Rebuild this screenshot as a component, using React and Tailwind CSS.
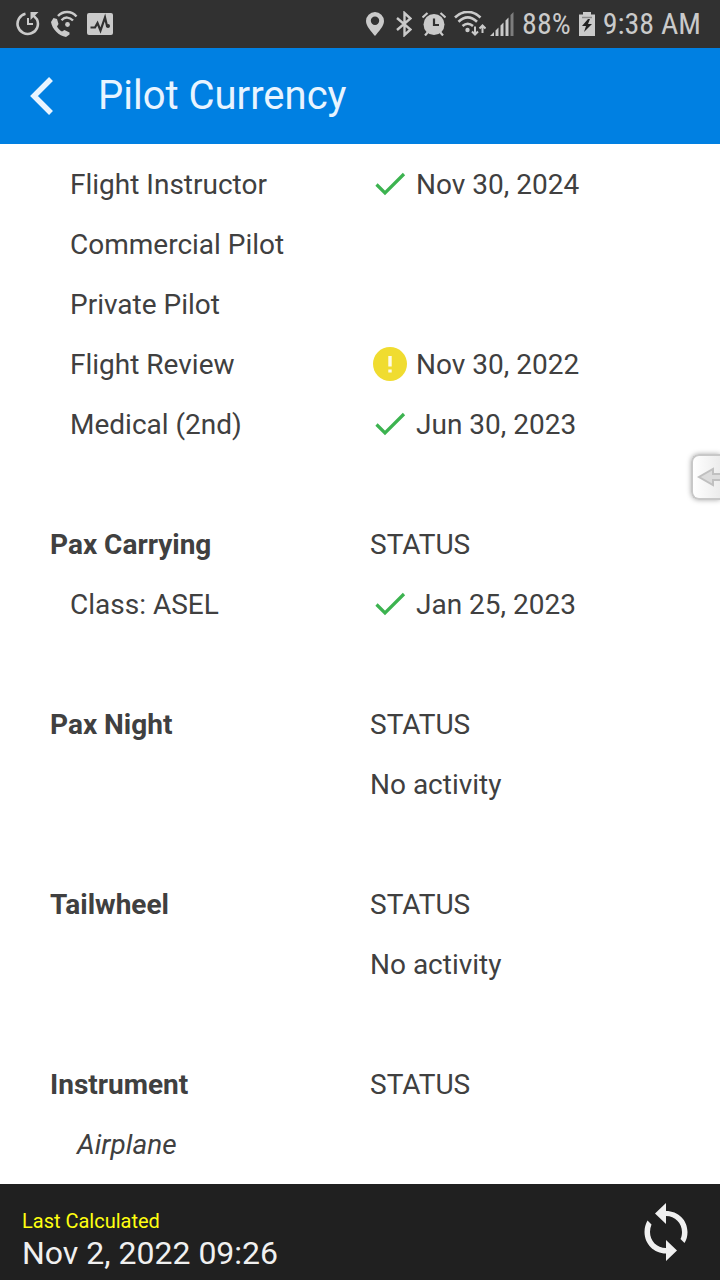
import React from 'react';

const sections = [
  {
    id: 'certificates',
    rows: [
      { label: 'Flight Instructor', state: 'ok', value: 'Nov 30, 2024' },
      { label: 'Commercial Pilot' },
      { label: 'Private Pilot' },
      { label: 'Flight Review', state: 'warn', value: 'Nov 30, 2022' },
      { label: 'Medical (2nd)', state: 'ok', value: 'Jun 30, 2023' },
    ],
  },
  {
    id: 'pax-carrying',
    title: 'Pax Carrying',
    rows: [{ label: 'Class: ASEL', state: 'ok', value: 'Jan 25, 2023' }],
  },
  { id: 'pax-night', title: 'Pax Night', rows: [{ value: 'No activity' }] },
  { id: 'tailwheel', title: 'Tailwheel', rows: [{ value: 'No activity' }] },
  { id: 'instrument', title: 'Instrument', rows: [{ label: 'Airplane', group: true }] },
];

function StatusBar() {
  return (
    <div className="flex h-12 items-center justify-between bg-[#313131] pl-4 pr-[19px] text-[#cacaca]">
      <div className="flex items-center gap-2.5">
        {/* Timer */}
        <svg className="h-6 w-6" viewBox="0 0 24 24" fill="none" stroke="currentColor" strokeWidth="2.6">
          <path d="M9.5 1.8A10.2 10.2 0 1 0 21 7.5L17 3" />
          <path d="M12 6V12H17" strokeWidth="2" />
          <path d="M14.5 0H22.5L14.5 8Z" fill="currentColor" stroke="none" />
        </svg>
        {/* Wi-Fi calling */}
        <svg className="h-7 w-7" viewBox="0 0 28 28" fill="none" stroke="currentColor" strokeWidth="2.4">
          <path d="M3.5 8L7 9L8.5 14L7 16.5C8.5 19 10 20.5 12 21.500L14.500 20L19.5 22.5V24.5L16 27C9 26 2 19 1 12Z" fill="currentColor" stroke="none" />
          <path d="M8 6C13 0.5 21.5 0.5 26.5 6.5M11.5 10.2C15 6.5 19.5 6.8 23 10.5" />
          <circle cx="17.5" cy="14.5" r="2.4" fill="currentColor" stroke="none" />
        </svg>
        {/* Activity */}
        <svg className="-ml-px h-6 w-[26px]" viewBox="0 0 26 24">
          <rect y="1" width="26" height="22" rx="2" fill="currentColor" />
          <path d="M3.5 15.5H8L10.5 11L13.5 18.5L18 5.5L20 14H22" fill="none" stroke="#313131" strokeWidth="2.2" />
          <circle cx="21" cy="14" r="2" fill="#313131" />
        </svg>
      </div>
      <div className="flex items-center">
        {/* Location */}
        <svg className="h-6 w-[18px]" viewBox="0 0 18 24" fill="currentColor" fillRule="evenodd">
          <path d="M9 0A9 9 0 0 0 0 9C0 14 5 19 9 24C13 19 18 14 18 9A9 9 0 0 0 9 0ZM9 4.5A4.2 4.2 0 1 1 9 12.9A4.2 4.2 0 1 1 9 4.5Z" />
        </svg>
        {/* Bluetooth */}
        <svg className="ml-3 h-[26px] w-4" viewBox="0 0 16 26" fill="none" stroke="currentColor" strokeWidth="2.4">
          <path d="M1 7L14.5 18.5L8.5 24V2L14.5 7.5L1 19" />
        </svg>
        {/* Alarm */}
        <svg className="ml-2.5 h-6 w-6" viewBox="0 0 24 24" fill="none" stroke="currentColor" strokeWidth="2.2">
          <circle cx="12" cy="12.5" r="10.5" fill="currentColor" stroke="none" />
          <path d="M0.5 5.5L5.5 1M23.5 5.5L18.5 1M6 20L3 23.5M18 20L21 23.5" />
          <path d="M12 6.5V13H17" stroke="#313131" />
        </svg>
        {/* Wi-Fi with traffic arrows */}
        <svg className="ml-2 h-[26px] w-8" viewBox="0 0 32 26" fill="none" stroke="currentColor" strokeWidth="2.6">
          <path d="M1 6.5C8.5 -1 19 -1 26.5 6.5M4.5 10.8C10.5 5 17 5 23 10.8M8.5 15C12 12 15.5 12 19 15" />
          <circle cx="13.5" cy="19" r="2.2" fill="currentColor" stroke="none" />
          <path d="M21 15.5V23M18 20.5L21 23.5L24 20.5M28.5 22V15M25.5 17.5L28.5 14.5L31.5 17.5" strokeWidth="2" />
        </svg>
        {/* Signal */}
        <svg className="ml-1 h-6 w-6" viewBox="0 0 24 24" fill="currentColor">
          <path d="M0 24L4 20V24ZM5.5 18.5L8.5 15.5V24H5.5ZM10.5 13.5L13.5 10.5V24H10.5ZM15.5 8.5L18.5 5.5V24H15.5Z" />
          <path d="M20.5 3L23.5 0V24H20.5Z" opacity="0.5" />
        </svg>
        <span className="ml-2 font-['Roboto_Condensed','Liberation_Sans_Narrow',Roboto,sans-serif] text-[30px] leading-10">88%</span>
        {/* Charging battery */}
        <svg className="ml-2 h-6 w-4" viewBox="0 0 16 24">
          <path d="M4 0H12V2.5H16V24H0V2.5H4Z" fill="currentColor" />
          <path d="M3 5.5H13" stroke="#888888" strokeWidth="1.5" />
          <path d="M9 7L3 14H7L5 20L13 12H9L11 7Z" fill="#222222" />
        </svg>
        <span className="ml-2 font-['Roboto_Condensed','Liberation_Sans_Narrow',Roboto,sans-serif] text-[30px] leading-10">9:38 AM</span>
      </div>
    </div>
  );
}

function StateIcon({ state }) {
  if (state === 'warn') {
    return (
      <svg className="h-10 w-10 shrink-0" viewBox="0 0 40 40" role="img" aria-label="Expiring soon">
        <circle cx="20" cy="19" r="17" fill="#f0dc30" />
        <path d="M18.3 11H21.7V21.5H18.3ZM18.3 24.500H21.7V27.500H18.3Z" fill="#fffbe8" />
      </svg>
    );
  }
  return (
    <svg className="h-10 w-10 shrink-0" viewBox="0 0 40 40" role="img" aria-label="Current">
      <path d="M6.5 19.500L15 28L34 9" fill="none" stroke="#3cb350" strokeWidth="3.2" />
    </svg>
  );
}

function CurrencyTable({ section }) {
  return (
    <table className="w-full table-fixed border-collapse text-left">
      {section.title && (
        <thead>
          <tr className="h-[60px]">
            <th scope="col" className="p-0 font-bold">{section.title}</th>
            <th scope="col" className="p-0 font-normal">STATUS</th>
          </tr>
        </thead>
      )}
      <tbody>
        {section.rows.map((row) => (
          <tr key={row.label || row.value} className="h-[60px]">
            <th scope="row" className={row.group ? 'p-0 pl-[27px] font-normal italic' : 'p-0 pl-5 font-normal'}>
              {row.label}
            </th>
            <td className="p-0">
              <div className="flex items-center gap-1.5">
                {row.state && <StateIcon state={row.state} />}
                {row.value}
              </div>
            </td>
          </tr>
        ))}
      </tbody>
    </table>
  );
}

export default function App() {
  return (
    <div className="relative flex min-h-screen flex-col bg-white font-[Roboto,sans-serif] text-[#404040]">
      <StatusBar />

      <header className="flex h-24 items-center gap-10 bg-[#0080e2] pl-6 text-[#e8f4ff]">
        <button type="button" aria-label="Back" className="flex h-12 w-[34px] items-center justify-center">
          <svg className="h-10 w-6" viewBox="0 0 24 40" fill="none" stroke="currentColor" strokeWidth="5.5">
            <path d="M22 3L5 20L22 37" />
          </svg>
        </button>
        <h1 className="text-[40px] leading-12">Pilot Currency</h1>
      </header>

      <main className="flex flex-1 flex-col gap-[60px] pb-[9px] pt-[11px] pl-[50px] pr-[30px] text-[28px] leading-10">
        {sections.map((section) => (
          <CurrencyTable key={section.id} section={section} />
        ))}
      </main>

      {/* Edge handle floating over the list */}
      <button
        type="button"
        aria-label="Open side panel"
        className="absolute right-0 top-[454px] flex h-[46px] w-[29px] items-center justify-end rounded-l-lg border-2 border-r-0 border-[#c8c8c8] bg-linear-to-r from-white to-[#ececec] shadow-[0_0_5px_#aaaaaa]"
      >
        <svg className="h-5 w-6" viewBox="0 0 24 20" fill="#dcdcdc" stroke="#c0c0c0" strokeWidth="2">
          <path d="M26 7H17V2L3 10L17 18V13H26" />
        </svg>
      </button>

      <footer className="flex h-24 items-center justify-between bg-[#202020] pl-[22px] pr-8 text-[#f0f0f0]">
        <div className="pt-3.5">
          <p className="text-[20px] leading-7 text-[#ffff10]">Last Calculated</p>
          <p className="text-[32px] leading-9">Nov 2, 2022 09:26</p>
        </div>
        <button type="button" aria-label="Recalculate">
          <svg className="h-[60px] w-11" viewBox="0 0 44 60" fill="currentColor">
            <path d="M22 1V9C34 9 43.5 18 43.5 30C43.5 34 42.5 38 40.5 41L36.5 37C37.5 35 38 32.5 38 30C38 21 31 14 22 14V22L11 11.5ZM22 59V51.5C10 51.5 0.5 42 0.5 30C0.5 25.5 1.5 22 3.5 18.5L7.5 22.5C6.500 25 6 27.5 6 30C6 39 13 46 22 46V38L33 48.5Z" />
          </svg>
        </button>
      </footer>
    </div>
  );
}
